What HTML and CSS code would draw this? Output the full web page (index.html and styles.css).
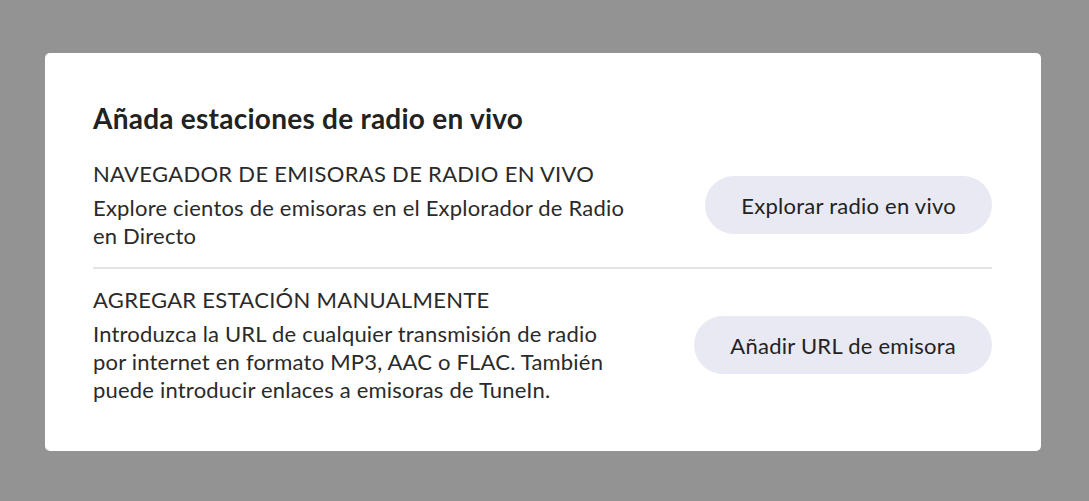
FILE: index.html
```html
<!DOCTYPE html>
<html lang="es">
<head>
    <meta charset="UTF-8">
    <title>Añada estaciones de radio en vivo</title>
    <link rel="stylesheet" href="styles.css">
</head>
<body>
    <div class="modal">
        <h2 class="modal-title">Añada estaciones de radio en vivo</h2>

        <div class="option-row">
            <div class="option-text">
                <div class="option-heading">NAVEGADOR DE EMISORAS DE RADIO EN VIVO</div>
                <p class="option-desc">Explore cientos de emisoras en el Explorador de Radio en Directo</p>
            </div>
            <button class="option-btn">Explorar radio en vivo</button>
        </div>

        <div class="option-row">
            <div class="option-text">
                <div class="option-heading">AGREGAR ESTACIÓN MANUALMENTE</div>
                <p class="option-desc">Introduzca la URL de cualquier transmisión de radio por internet en formato MP3, AAC o FLAC. También puede introducir enlaces a emisoras de TuneIn.</p>
            </div>
            <button class="option-btn">Añadir URL de emisora</button>
        </div>
    </div>
</body>
</html>
```

FILE: styles.css
```css
* {
    box-sizing: border-box;
    font-family: 'Lato', 'Liberation Sans', sans-serif;
}

body {
    margin: 0;
    padding: 53px 0 0 45px;
    background-color: #939393;
    height: 100vh;
    overflow: hidden;
}

.modal {
    width: 996px;
    height: 398px;
    background-color: #ffffff;
    border-radius: 5px;
    padding: 48px 49px 0 48px;
    color: #222;
}

.modal-title {
    margin: 0 0 25px;
    font-size: 28px;
    font-weight: bold;
    line-height: 34px;
    letter-spacing: 0.25px;
    color: #222;
}

.option-row {
    display: flex;
    justify-content: space-between;
    align-items: center;
}

.option-row:first-of-type {
    padding-bottom: 17px;
    border-bottom: 2px solid #e3e3e3;
}

.option-row + .option-row {
    padding-top: 17px;
}

.option-text {
    width: 538px;
}

.option-heading {
    font-size: 22px;
    line-height: 28px;
    letter-spacing: 0.3px;
    color: #2a2a2a;
    margin-bottom: 6px;
}

.option-desc {
    margin: 0;
    font-size: 22px;
    line-height: 28px;
    letter-spacing: 0.2px;
    color: #2a2a2a;
}

.option-btn {
    background-color: #e8e9f3;
    color: #222;
    border: none;
    border-radius: 29px;
    height: 58px;
    padding: 0 36px;
    font-size: 22px;
    letter-spacing: 0.25px;
    cursor: pointer;
}
```
